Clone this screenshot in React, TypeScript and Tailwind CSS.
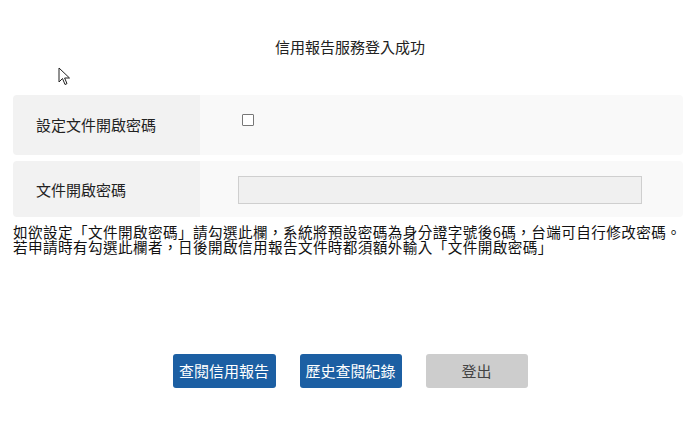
const font = { fontFamily: '"Noto Sans CJK TC", "Noto Sans", sans-serif' }

export default function App() {
  return (
    <div className="relative w-[700px] h-[434px] bg-white text-[#222]" style={font}>
      {/* mouse pointer from the screenshot */}
      <svg className="absolute left-[58px] top-[67px]" width="14" height="20" viewBox="0 0 14 20">
        <path d="M1 1 L1 15 L4.5 11.5 L7 17.5 L9 16.6 L6.6 11 L11.5 11 Z" fill="#fff" stroke="#222" strokeWidth="1" strokeLinejoin="round" />
      </svg>

      <div className="pt-[37px] text-center text-[15px] leading-[20px]">信用報告服務登入成功</div>

      <div className="mt-[38px] pl-[13px] pr-[17px] flex flex-col gap-[6px]">
        <div className="flex h-[60px] rounded-[4px] overflow-hidden">
          <div className="w-[187px] bg-[#f2f2f2] flex items-center pl-[23px] pt-[1px] text-[15px]">
            設定文件開啟密碼
          </div>
          <div className="flex-1 bg-[#f9f9f9] pl-[42px] pt-[19px]">
            <div className="w-[12px] h-[12px] border border-[#777] bg-white rounded-[1px]" />
          </div>
        </div>
        <div className="flex h-[56px] rounded-[4px] overflow-hidden">
          <div className="w-[187px] bg-[#f2f2f2] flex items-center pl-[23px] pt-[2px] text-[15px]">
            文件開啟密碼
          </div>
          <div className="flex-1 bg-[#f9f9f9] pl-[38px] flex items-center pt-[2px]">
            <div className="w-[404px] h-[28px] bg-[#f0f0f0] border border-[#cfcfcf]" />
          </div>
        </div>
      </div>

      <p className="mt-[7px] px-[13px] text-[14.6px] leading-[15px] tracking-[0.4px] text-[#111] whitespace-nowrap">
        如欲設定「文件開啟密碼」請勾選此欄，系統將預設密碼為身分證字號後6碼，台端可自行修改密碼。
        <br />
        若申請時有勾選此欄者，日後開啟信用報告文件時都須額外輸入「文件開啟密碼」
      </p>

      <div className="mt-[100px] flex justify-center gap-[24px]">
        <button className="w-[103px] h-[34px] rounded-[3px] bg-[#1c5fa3] text-white text-[15px]">查閱信用報告</button>
        <button className="w-[102px] h-[34px] rounded-[3px] bg-[#1c5fa3] text-white text-[15px]">歷史查閱紀錄</button>
        <button className="w-[102px] h-[34px] rounded-[3px] bg-[#cdcdcd] text-[#444] text-[15px]">登出</button>
      </div>
    </div>
  )
}
